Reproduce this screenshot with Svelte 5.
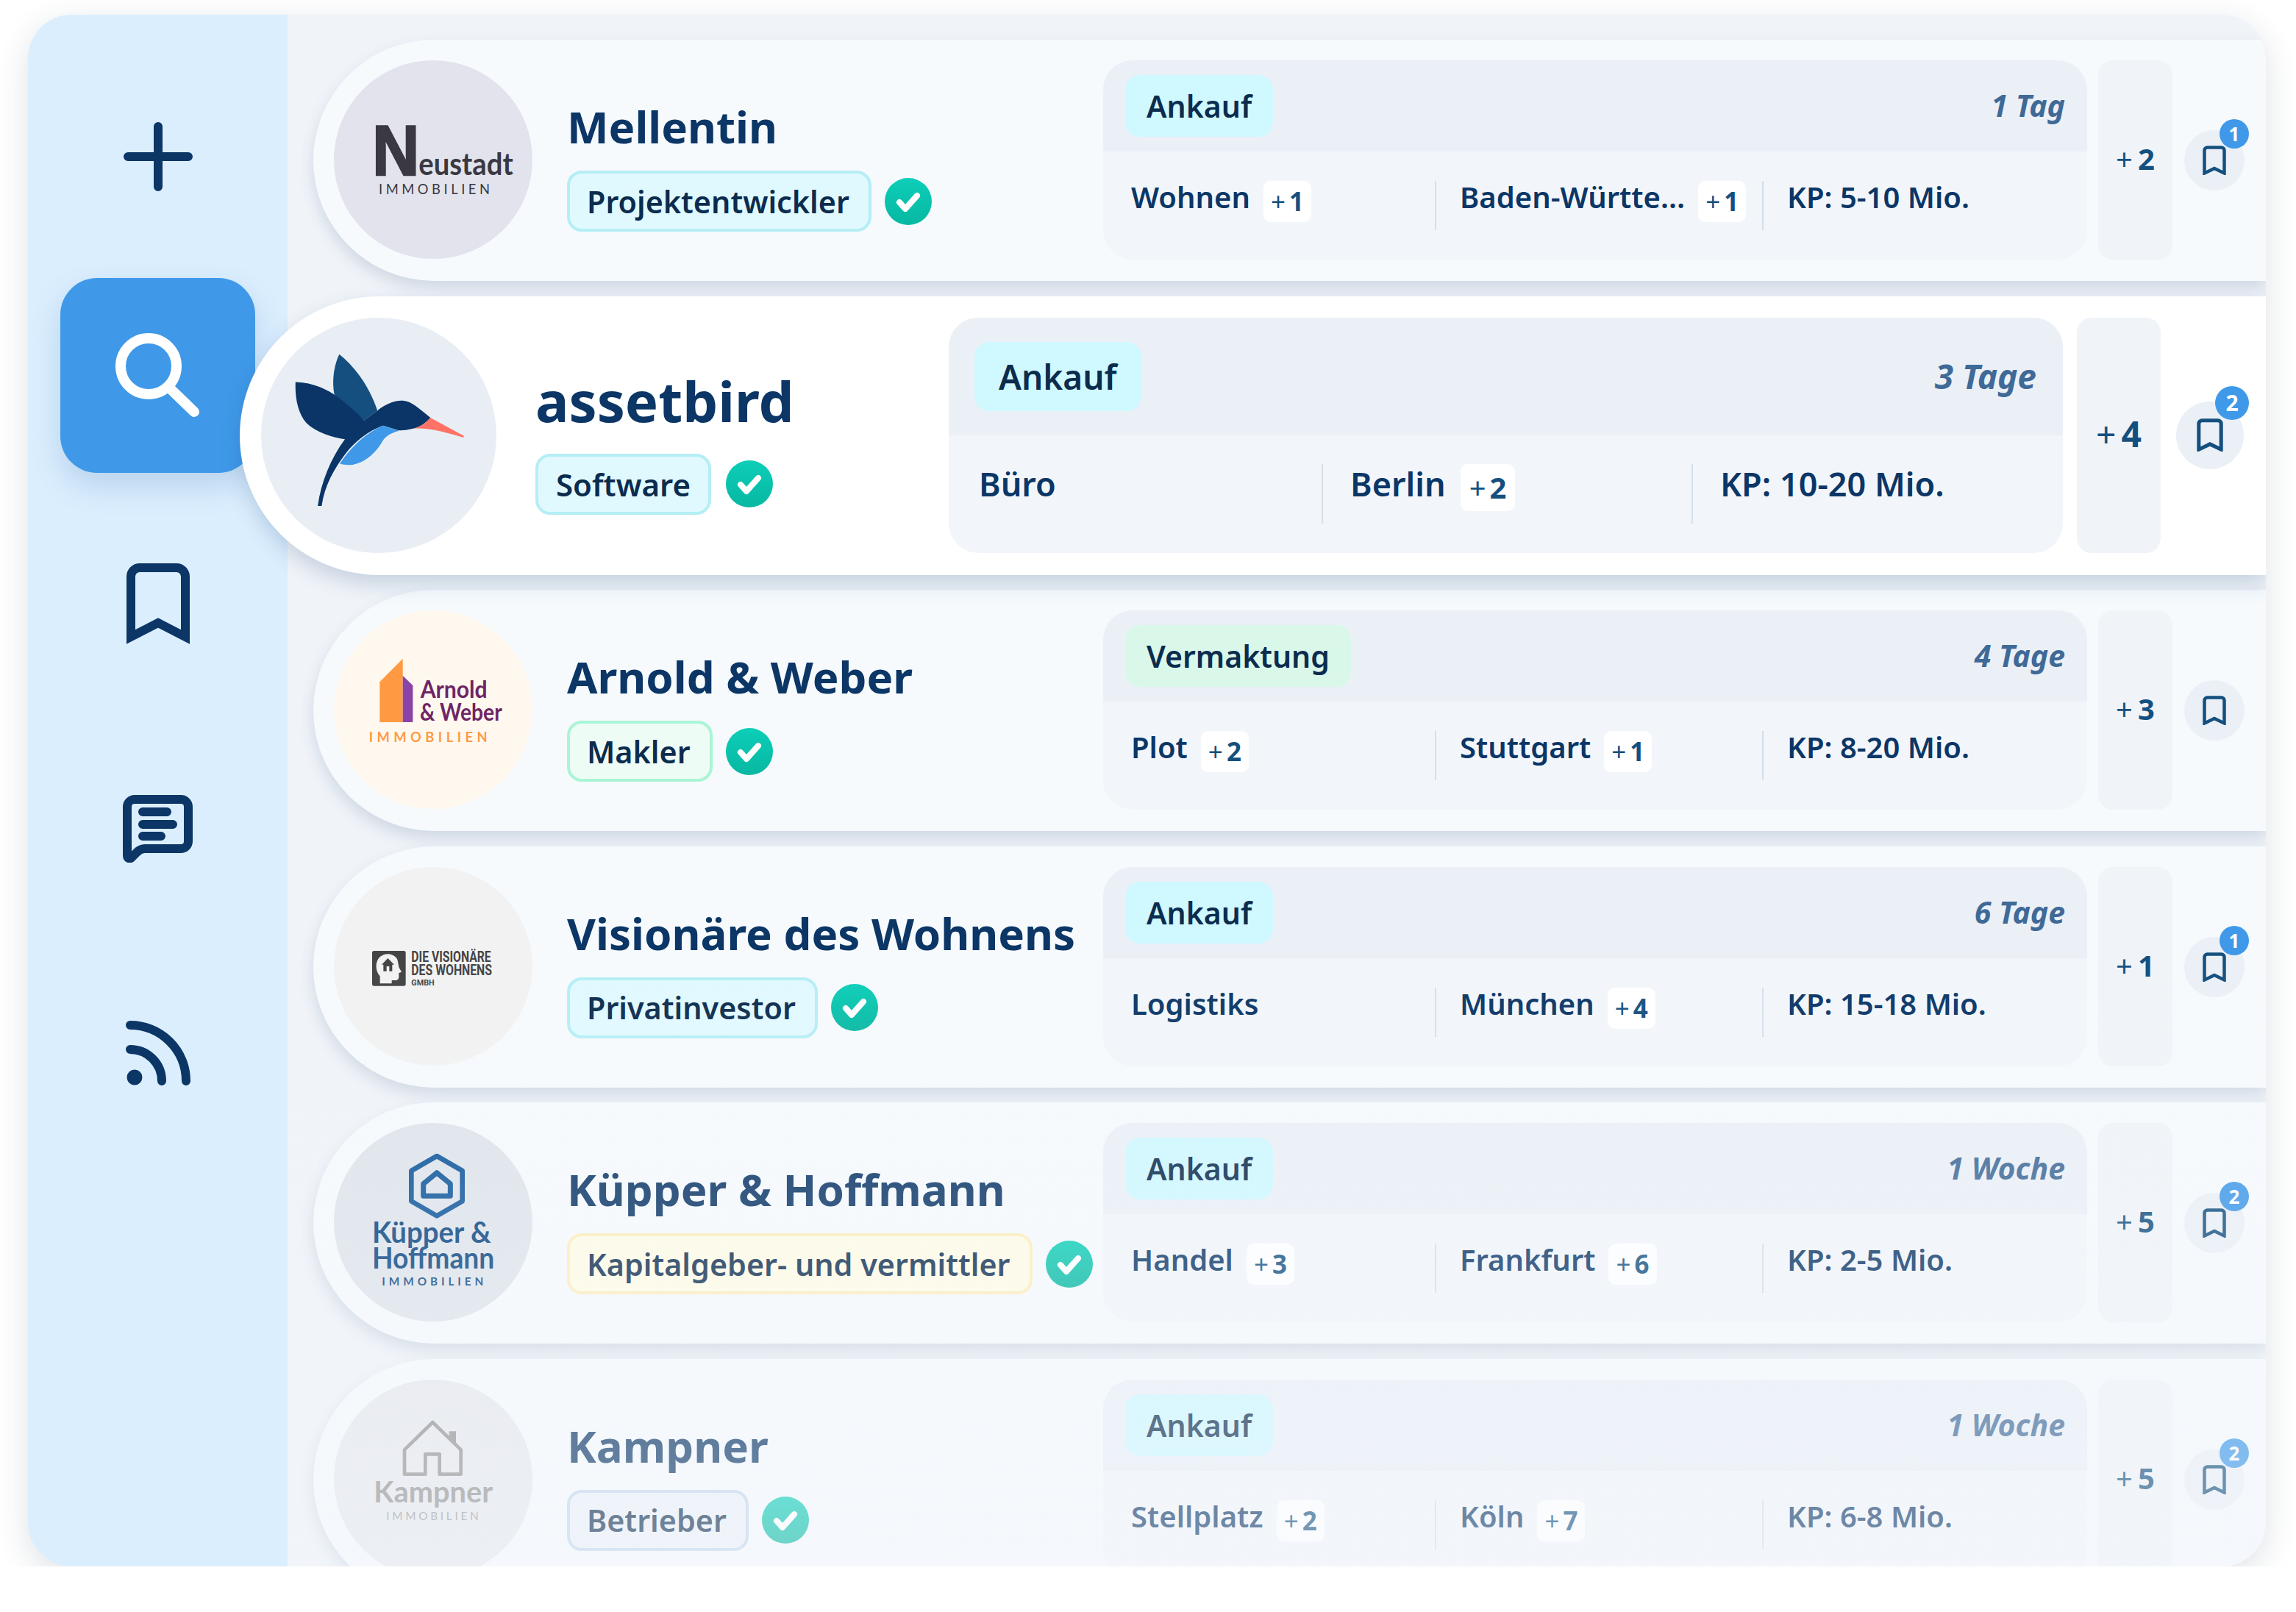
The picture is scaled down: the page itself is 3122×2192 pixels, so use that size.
<script>
  const companies = [
    { name: "Mellentin", logo: "neustadt", role: "Projektentwickler", tone: "cyan", deal: "Ankauf", dealTone: "cyan", age: "1 Tag",
      use: "Wohnen", useMore: 1, region: "Baden-Württe…", regionMore: 1, price: "KP: 5-10 Mio.", more: 2, saved: 1 },
    { name: "assetbird", logo: "bird", role: "Software", tone: "cyan", deal: "Ankauf", dealTone: "cyan", age: "3 Tage", active: true,
      use: "Büro", useMore: 0, region: "Berlin", regionMore: 2, price: "KP: 10-20 Mio.", more: 4, saved: 2 },
    { name: "Arnold & Weber", logo: "arnold", role: "Makler", tone: "green", deal: "Vermaktung", dealTone: "green", age: "4 Tage",
      use: "Plot", useMore: 2, region: "Stuttgart", regionMore: 1, price: "KP: 8-20 Mio.", more: 3, saved: 0 },
    { name: "Visionäre des Wohnens", logo: "vision", role: "Privatinvestor", tone: "cyan", deal: "Ankauf", dealTone: "cyan", age: "6 Tage",
      use: "Logistiks", useMore: 0, region: "München", regionMore: 4, price: "KP: 15-18 Mio.", more: 1, saved: 1 },
    { name: "Küpper & Hoffmann", logo: "kuepper", role: "Kapitalgeber- und vermittler", tone: "yellow", deal: "Ankauf", dealTone: "cyan", age: "1 Woche",
      use: "Handel", useMore: 3, region: "Frankfurt", regionMore: 6, price: "KP: 2-5 Mio.", more: 5, saved: 2 },
    { name: "Kampner", logo: "kampner", role: "Betrieber", tone: "grey", deal: "Ankauf", dealTone: "cyan", age: "1 Woche",
      use: "Stellplatz", useMore: 2, region: "Köln", regionMore: 7, price: "KP: 6-8 Mio.", more: 5, saved: 2 }
  ];
</script>

<div class="panel">
  <nav class="sidebar">
    <div class="nav-item">
      <svg width="94" height="94" viewBox="0 0 94 94"><path d="M47 6V88M6 47H88" /></svg>
    </div>
    <div class="nav-item current">
      <svg width="116" height="116" viewBox="0 0 116 116">
        <circle cx="45" cy="45" r="38" />
        <path d="M76 77L107 107" />
      </svg>
    </div>
    <div class="nav-item after-current">
      <svg class="sharp" width="86" height="110" viewBox="0 0 86 110"><path d="M6 100V18A12 12 0 0 1 18 6H68A12 12 0 0 1 80 18V100L43 81Z" /></svg>
    </div>
    <div class="nav-item">
      <svg width="95" height="92" viewBox="0 0 95 92">
        <path d="M6 82V16A10 10 0 0 1 16 6H79A10 10 0 0 1 89 16V63A10 10 0 0 1 79 73H30C25 73 22 75 19 78L12 85C9 88 6 86 6 82Z" />
        <path d="M27 23H60M27 40H68M27 56H52" />
      </svg>
    </div>
    <div class="nav-item">
      <svg width="88" height="90" viewBox="0 0 88 90">
        <path d="M6 6A76 76 0 0 1 82 82M6 39A43 43 0 0 1 49 82" />
        <circle class="dot" cx="12" cy="77" r="10.5" />
      </svg>
    </div>
  </nav>

  <main class="list">
    {#each companies as c}
      <article class="row" class:active={c.active}>
        <div class="logo logo-{c.logo}">
          {#if c.logo === "neustadt"}
            <svg viewBox="42 36 810 810">
              <text x="199" y="505" class="n" textLength="192" lengthAdjust="spacingAndGlyphs">N</text>
              <text x="388" y="505" class="neu" textLength="385" lengthAdjust="spacingAndGlyphs">eustadt</text>
              <text x="225" y="583" class="immo" fill="#3a3842" textLength="453">IMMOBILIEN</text>
            </svg>
          {:else if c.logo === "bird"}
            <svg viewBox="45 36 963 960">
              <path fill="#144f80" d="M365 184C345 225 333 290 345 350L466 455L521 415C490 320 430 235 365 184Z" />
              <path fill="#0a3566" d="M186 298C260 300 320 330 360 360C400 390 440 425 466 455L521 415C550 390 590 372 625 374C660 376 690 405 738 444C715 470 690 485 660 490C640 495 620 497 605 495L545 476C500 490 440 530 395 585C345 650 305 720 293 805L277 805C290 710 330 610 388 532C340 525 270 505 230 465C195 425 183 360 186 298Z" />
              <path fill="#3f99e8" d="M545 476L610 497C580 505 560 515 545 535C520 580 480 625 420 636C400 638 380 636 367 632C410 565 480 500 545 476Z" />
              <path fill="#ff7366" d="M738 444L875 518L873 525C800 505 740 485 668 488C700 480 720 465 738 444Z" />
            </svg>
          {:else if c.logo === "arnold"}
            <svg viewBox="42 6 810 810">
              <polygon fill="#ff9a42" points="229,298 323,203 323,462 229,462" />
              <polygon fill="#8a44a8" points="323,272 364,312 364,462 323,462" />
              <text x="395" y="362" class="aw" textLength="273" lengthAdjust="spacingAndGlyphs">Arnold</text>
              <text x="393" y="457" class="aw" textLength="335" lengthAdjust="spacingAndGlyphs">&amp; Weber</text>
              <text x="185" y="543" class="immo strong" fill="#ff9a42" textLength="483">IMMOBILIEN</text>
            </svg>
          {:else if c.logo === "vision"}
            <svg viewBox="42 0 810 810">
              <rect x="198" y="342" width="137" height="143" rx="8" fill="#444" />
              <path fill="#f2f2f2" d="M230 475V445C215 430 210 400 220 380C235 350 280 345 300 375C305 390 305 400 308 410L318 428L307 432V450C305 465 290 462 278 462V475Z" />
              <path fill="#444" d="M262 372L288 398H280V425H268V405H257V425H244V398H237Z" />
              <text x="358" y="387" class="vis" textLength="325" lengthAdjust="spacingAndGlyphs">DIE VISIONÄRE</text>
              <text x="358" y="442" class="vis" textLength="329" lengthAdjust="spacingAndGlyphs">DES WOHNENS</text>
              <text x="358" y="483" class="vis small" textLength="94" lengthAdjust="spacingAndGlyphs">GMBH</text>
            </svg>
          {:else if c.logo === "kuepper"}
            <svg viewBox="42 -3 810 810">
              <path class="line" stroke="#0d5599" stroke-width="20" d="M462 132L566 192V316L462 376L358 316V192Z" />
              <path class="line" stroke="#0d5599" stroke-width="21" d="M462 200L517 245V295H407V245Z" />
              <text x="198" y="487" class="ku" textLength="485" lengthAdjust="spacingAndGlyphs">Küpper &amp;</text>
              <text x="198" y="592" class="ku" textLength="499" lengthAdjust="spacingAndGlyphs">Hoffmann</text>
              <text x="238" y="660" class="immo small strong" fill="#05427e" textLength="414">IMMOBILIEN</text>
            </svg>
          {:else}
            <svg viewBox="42 -6 810 810">
              <path class="line" stroke="#919191" stroke-width="14" d="M445 168L330 280V380H415V298H473V380H560V280Z" />
              <path fill="#919191" d="M512 205H540V255L512 228Z" />
              <text x="205" y="495" class="kam" textLength="485" lengthAdjust="spacingAndGlyphs">Kampner</text>
              <text x="256" y="566" class="immo small" fill="#999" textLength="376">IMMOBILIEN</text>
            </svg>
          {/if}
        </div>

        <div class="info">
          <h2>{c.name}</h2>
          <div class="role-line">
            <span class="role {c.tone}">{c.role}</span>
            <svg class="check" viewBox="0 0 64 64">
              <defs>
                <linearGradient id="teal" x1="0" y1="0" x2="0" y2="1">
                  <stop offset="0" stop-color="#0cceb8" />
                  <stop offset="1" stop-color="#07b8a2" />
                </linearGradient>
              </defs>
              <circle cx="32" cy="32" r="32" fill="url(#teal)" />
              <path d="M20 33L28 42L44 24" />
            </svg>
          </div>
        </div>

        <section class="card">
          <header>
            <span class="deal {c.dealTone}">{c.deal}</span>
            <em>{c.age}</em>
          </header>
          <div class="facts">
            <div class="fact">
              <span>{c.use}</span>
              {#if c.useMore}<span class="count"><i>+</i><b>{c.useMore}</b></span>{/if}
            </div>
            <div class="fact">
              <span>{c.region}</span>
              {#if c.regionMore}<span class="count"><i>+</i><b>{c.regionMore}</b></span>{/if}
            </div>
            <div class="fact"><span>{c.price}</span></div>
          </div>
        </section>

        <div class="more"><i>+</i><b>{c.more}</b></div>

        <div class="save">
          <svg viewBox="0 0 32 40"><path d="M2.5 37.5V6.5A4 4 0 0 1 6.500 2.500H25.500A4 4 0 0 1 29.500 6.500V37.500L16 31Z" /></svg>
          {#if c.saved}<span class="badge">{c.saved}</span>{/if}
        </div>
      </article>
    {/each}
  </main>

  <div class="fade"></div>
</div>

<style>
  :global(body) {
    margin: 0;
    background: #fff;
  }

  .panel {
    position: relative;
    display: flex;
    width: 3043px;
    height: 2110px;
    margin: 20px 0 0 38px;
    border-radius: 60px;
    overflow: hidden;
    background: #f0f4f9;
    box-shadow: 0 12px 44px rgba(30, 50, 80, 0.14);
    font-family: "Noto Sans", "Open Sans", sans-serif;
    color: #0b3666;
  }

  /* Sidebar */
  .sidebar {
    flex: 0 0 353px;
    display: flex;
    flex-direction: column;
    align-items: center;
    gap: 41px;
    padding-top: 60px;
    background: #dbeefe;
  }

  .nav-item {
    width: 265px;
    height: 265px;
    flex: none;
    display: flex;
    align-items: center;
    justify-content: center;
    border-radius: 50px;
  }

  .nav-item svg {
    fill: none;
    stroke: #0b3666;
    stroke-width: 12;
    stroke-linecap: round;
    stroke-linejoin: round;
  }

  .nav-item svg.sharp {
    stroke-linejoin: miter;
    stroke-miterlimit: 3;
  }

  .nav-item .dot {
    fill: #0b3666;
    stroke: none;
  }

  .current {
    margin-top: -8px;
    background: #3f99e8;
    box-shadow: 0 18px 40px rgba(30, 90, 160, 0.18);
  }

  .nav-item.current svg {
    stroke: #fff;
    stroke-width: 14;
  }

  .after-current {
    margin-top: 4px;
  }

  /* Rows */
  .list {
    flex: 1;
    min-width: 0;
    display: flex;
    flex-direction: column;
    gap: 20.6px;
    padding: 34px 0 0 35px;
    position: relative;
  }

  .row {
    flex: none;
    height: 328px;
    box-sizing: border-box;
    display: flex;
    padding: 28px 29px 29px 28px;
    background: #f6fafd;
    border-radius: 164px 0 0 164px;
    box-shadow: 0 10px 20px rgba(40, 70, 110, 0.16);
  }

  .row.active {
    height: 379px;
    margin-left: -100px;
    padding: 29px 30px 30px 29px;
    background: #fff;
    border-radius: 190px 0 0 190px;
    position: relative;
    z-index: 2;
    box-shadow: 0 12px 28px rgba(30, 70, 120, 0.2);
  }

  /* Logo circle */
  .logo {
    flex: none;
    width: 270px;
    height: 270px;
    border-radius: 50%;
    overflow: hidden;
  }

  .active .logo {
    width: 320px;
    height: 320px;
  }

  .logo svg {
    display: block;
    width: 100%;
    height: 100%;
  }

  .logo-neustadt { background: #e2e3ec; }
  .logo-bird { background: #e9eef5; }
  .logo-arnold { background: #fff8ef; }
  .logo-vision { background: #f2f2f2; }
  .logo-kuepper { background: #dfe4eb; }
  .logo-kampner { background: #e6e8ec; }

  .immo {
    font-family: Lato, sans-serif;
    font-size: 55px;
    font-weight: 400;
  }

  .immo.small {
    font-size: 46px;
  }

  .immo.strong {
    font-weight: 700;
  }

  .n {
    font-family: "Liberation Sans", sans-serif;
    font-size: 288px;
    font-weight: 700;
    fill: #3a3842;
    stroke: #3a3842;
    stroke-width: 8;
  }

  .neu {
    font-family: Lato, sans-serif;
    font-size: 126px;
    font-weight: 700;
    fill: #3a3842;
  }

  .aw {
    font-family: Lato, sans-serif;
    font-size: 96px;
    font-weight: 700;
    fill: #6e2565;
  }

  .vis {
    font-family: Roboto, sans-serif;
    font-size: 58px;
    font-weight: 700;
    fill: #444;
  }

  .vis.small {
    font-size: 33px;
  }

  .ku {
    font-family: Lato, sans-serif;
    font-size: 118px;
    font-weight: 700;
    fill: #05427e;
  }

  .kam {
    font-family: Lato, sans-serif;
    font-size: 118px;
    font-weight: 700;
    fill: #919191;
  }

  .line {
    fill: none;
    stroke-linejoin: round;
  }

  /* Name and role */
  .info {
    flex: 1;
    min-width: 0;
    padding: 54px 0 0 47px;
  }

  .active .info {
    padding: 68px 0 0 53px;
  }

  h2 {
    margin: 0 0 24px;
    font-size: 60px;
    line-height: 72px;
    font-weight: 700;
    white-space: nowrap;
  }

  .active h2 {
    margin-bottom: 27px;
    font-size: 76px;
    line-height: 90px;
  }

  .role-line {
    display: flex;
    align-items: center;
    gap: 18px;
  }

  .active .role-line {
    gap: 20px;
  }

  .role {
    box-sizing: border-box;
    height: 83px;
    display: flex;
    align-items: center;
    padding: 0 26px 0 23px;
    border: 4px solid;
    border-radius: 20px;
    font-size: 41.300px;
    font-weight: 600;
    color: #0c2c4e;
    white-space: nowrap;
  }

  .active .role {
    padding: 0 24px 0 24px;
    font-size: 42px;
  }

  .role.cyan { background: #e0f9ff; border-color: #b5eef5; }
  .role.green { background: #eefcf6; border-color: #a9f5d6; }
  .role.yellow { background: #fffce6; border-color: #fdeebb; }
  .role.grey { background: #ecf1f8; border-color: #c3d7ec; }

  .check {
    flex: none;
    width: 64px;
    height: 64px;
  }

  .check path {
    fill: none;
    stroke: #fff;
    stroke-width: 8;
    stroke-linecap: round;
    stroke-linejoin: round;
  }

  /* Deal card */
  .card {
    flex: none;
    width: 1338px;
    border-radius: 40px;
    overflow: hidden;
    background: #f2f6fb;
  }

  .active .card {
    width: 1515px;
  }

  .card header {
    height: 124px;
    display: flex;
    align-items: center;
    justify-content: space-between;
    padding: 0 30px;
    background: #ebf0f7;
  }

  .active .card header {
    height: 160px;
    padding: 0 36px 0 35px;
  }

  .deal {
    height: 84px;
    display: flex;
    align-items: center;
    padding: 0 29px;
    border-radius: 20px;
    font-size: 41px;
    font-weight: 600;
    color: #0c2c4e;
  }

  .active .deal {
    height: 94px;
    padding: 0 33px;
    font-size: 46px;
  }

  .deal.cyan { background: #cff8ff; }
  .deal.green { background: #d9f8ea; }

  .card em {
    margin-bottom: 2px;
    font-size: 41px;
    font-weight: 700;
    color: #3f6a97;
  }

  .active .card em {
    font-size: 46px;
  }

  .facts {
    display: grid;
    grid-template-columns: 413px 445px 1fr;
    padding: 40px 0 0 38px;
  }

  .active .facts {
    grid-template-columns: 466px 503px 1fr;
    padding: 39px 0 0 41px;
  }

  .fact {
    height: 67px;
    display: flex;
    align-items: flex-start;
    gap: 18px;
    font-size: 40px;
    line-height: 44px;
    font-weight: 600;
    white-space: nowrap;
  }

  .fact + .fact {
    padding-left: 32px;
    border-left: 2px solid #d5dfe9;
  }

  .active .fact {
    height: 81px;
    gap: 20px;
    font-size: 45px;
    line-height: 54px;
  }

  .active .fact + .fact {
    padding-left: 37px;
  }

  .count {
    height: 56px;
    display: flex;
    align-items: center;
    gap: 5px;
    padding: 0 10px;
    border-radius: 10px;
    background: #fff;
    font-size: 35px;
    color: #14507f;
  }

  .active .count {
    height: 64px;
    padding: 0 12px;
    font-size: 40px;
  }

  i {
    font-style: normal;
    font-weight: 400;
  }

  b {
    font-weight: 700;
  }

  .more {
    flex: none;
    width: 101px;
    margin-left: 15px;
    padding-bottom: 4px;
    box-sizing: border-box;
    display: flex;
    align-items: center;
    justify-content: center;
    gap: 7px;
    border-radius: 20px;
    background: #f0f4f9;
    font-size: 40px;
    color: #14507f;
  }

  .active .more {
    width: 114px;
    margin-left: 19px;
    font-size: 48px;
  }

  /* Bookmark */
  .save {
    flex: none;
    position: relative;
    width: 82px;
    height: 82px;
    margin: 95px 0 0 16px;
    display: flex;
    align-items: center;
    justify-content: center;
    border-radius: 50%;
    background: #ebf0f7;
  }

  .active .save {
    width: 92px;
    height: 92px;
    margin: 114px 0 0 21px;
  }

  .save svg {
    width: 32px;
    height: 40px;
    fill: none;
    stroke: #14507f;
    stroke-width: 4.500;
    stroke-linejoin: miter;
  }

  .active .save svg {
    width: 36px;
    height: 45px;
  }

  .badge {
    position: absolute;
    left: 48px;
    top: -15px;
    width: 40px;
    height: 40px;
    display: flex;
    align-items: center;
    justify-content: center;
    border-radius: 50%;
    background: #3f99e8;
    color: #fff;
    font-size: 26px;
    font-weight: 700;
  }

  .active .badge {
    left: 53px;
    top: -21px;
    width: 46px;
    height: 46px;
    font-size: 30px;
  }

  /* Lower rows wash out towards the bottom */
  .fade {
    position: absolute;
    left: 353px;
    right: 0;
    bottom: 0;
    height: 830px;
    z-index: 3;
    pointer-events: none;
    background: linear-gradient(to bottom, rgba(243, 247, 252, 0), rgba(243, 247, 252, 0.46));
  }
</style>
